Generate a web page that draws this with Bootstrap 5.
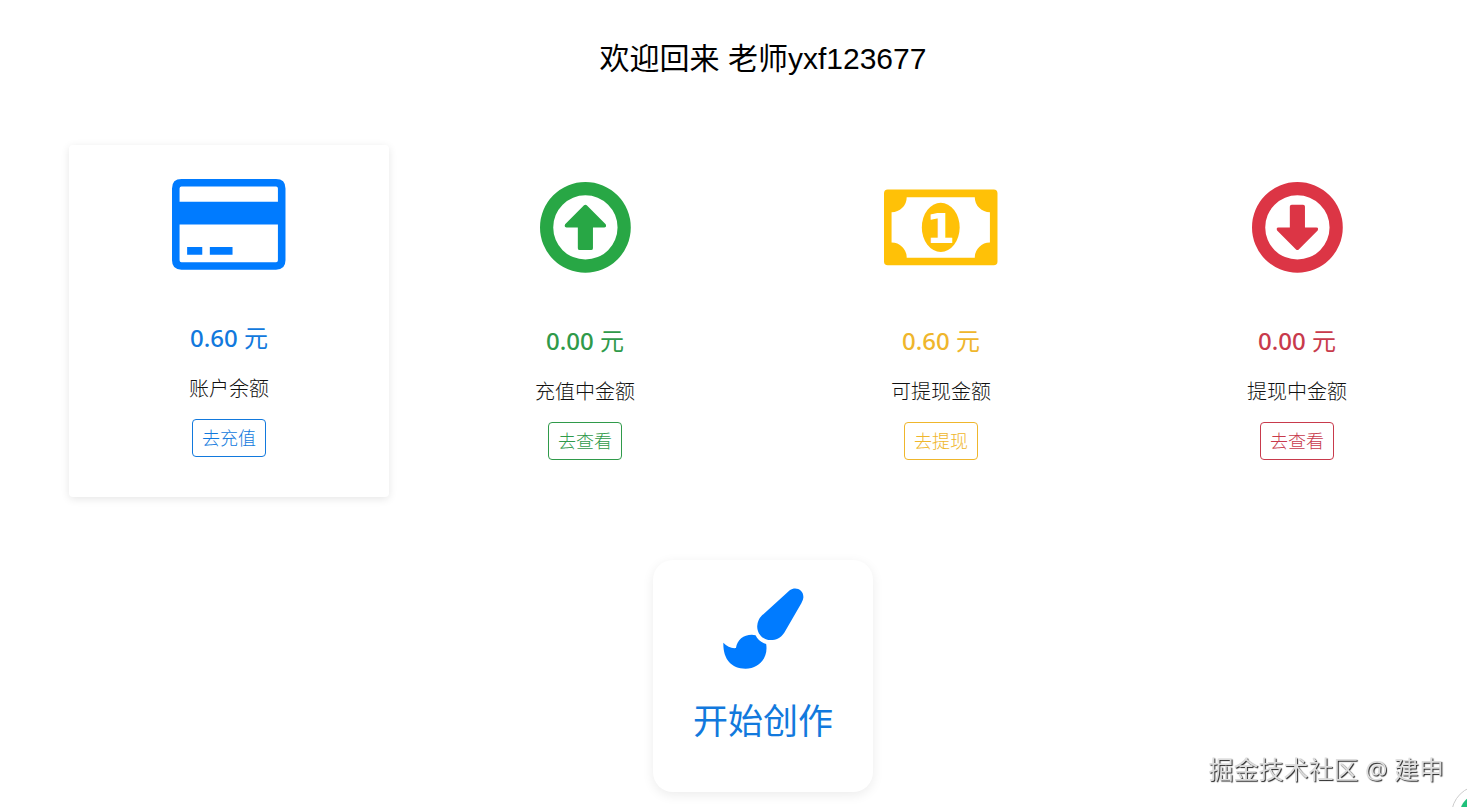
<!DOCTYPE html>
<html lang="zh-CN">
<head>
<meta charset="utf-8">
<meta name="viewport" content="width=device-width, initial-scale=1">
<title>欢迎回来</title>
<link href="https://cdn.jsdelivr.net/npm/bootstrap@5.3.0/dist/css/bootstrap.min.css" rel="stylesheet">
<style>
  body { font-family: "Noto Sans", "Noto Sans CJK SC", sans-serif; color: #212529; overflow: hidden; }
  .dashboard { margin-left: 51px; margin-right: -8px; padding-top: 40px; padding-bottom: 15px; }
  .welcome { font: 400 30px/38px "Liberation Sans", "Noto Sans CJK SC", sans-serif; color: #000; margin-bottom: 70px; }
  .wallet { margin: 0 18px; padding-top: 34px; height: 352px; border-radius: 4px; color: var(--tone); }
  .wallet.raised { margin-top: -3px; box-shadow: 0 2px 8px rgba(0, 0, 0, .1); }
  .wallet svg { display: block; height: 92px; fill: currentColor; overflow: visible; }
  .amount { font-size: 24px; line-height: 32px; font-weight: 500; margin: 51px 0 0; color: var(--ink); }
  .amount span { font-weight: 400; }
  .caption { font-size: 20px; line-height: 30px; font-weight: 300; color: #111; margin: 20px 0 15px; }
  .btn-tone { --bs-btn-color: var(--ink); --bs-btn-border-color: var(--ink); --bs-btn-hover-color: #fff; --bs-btn-hover-bg: var(--tone);
    --bs-btn-border-radius: 4px; --bs-btn-padding-x: 9px; --bs-btn-padding-y: 5px; --bs-btn-font-size: 18px; --bs-btn-line-height: 26px; font-weight: 300; }
  .tone-blue { --tone: #007bff; --ink: #1279dd; }
  .tone-green { --tone: #28a745; --ink: #2f9a4a; }
  .tone-yellow { --tone: #ffc107; --ink: #efb62c; }
  .tone-red { --tone: #dc3545; --ink: #c83a4c; }
  .create { width: 220px; height: 232px; margin: 60px auto 0; padding-top: 28px; border-radius: 20px; color: var(--ink); box-shadow: 0 3px 12px rgba(0, 0, 0, .08); font-size: 35px; line-height: 50px; }
  .create svg { width: 81px; height: 81px; fill: var(--tone); margin-bottom: 27px; }
  .credit { right: 23px; bottom: 20px; font-size: 25px; line-height: 36px; color: #ddd; text-shadow: 1px 1px 1px #222; }
  .helper { right: -44px; bottom: -38px; width: 60px; height: 60px; border: 1px solid #ccc; background: radial-gradient(circle, #1fc17b 21px, #fff 22px); }
</style>
</head>
<body class="bg-white">
<main class="dashboard">
  <h1 class="welcome text-center">欢迎回来 老师yxf123677</h1>
  <div class="row row-cols-4 g-0">
    <div class="col">
      <section class="wallet raised tone-blue d-flex flex-column align-items-center">
        <svg viewBox="0 0 15 12.16" aria-hidden="true"><path fill-rule="evenodd" d="M1.25 0h12.5Q15 0 15 1.25v9.5Q15 12 13.750 12H1.25Q0 12 0 10.750v-9.500Q0 0 1.250 0zM1.250 1Q1 1 1 1.250V3h13V1.250Q14 1 13.750 1zM1 6v4.750Q1 11 1.250 11h12.500Q14 11 14 10.750V6zM2 9h2v1H2zM5 9h3v1H5z"/></svg>
        <h2 class="amount">0.60 <span>元</span></h2>
        <p class="caption">账户余额</p>
        <button type="button" class="btn btn-tone">去充值</button>
      </section>
    </div>
    <div class="col">
      <section class="wallet tone-green d-flex flex-column align-items-center">
        <svg viewBox="0 0 12 12.16" aria-hidden="true"><path fill-rule="evenodd" d="M6 0a6 6 0 1 1 0 12A6 6 0 1 1 6 0zm0 1.750a4.250 4.250 0 1 0 0 8.500a4.250 4.250 0 1 0 0-8.500zM5.820 3.080Q6 2.920 6.180 3.080L8.680 5.580Q8.850 6 8.500 6H7v2.750Q7 9 6.750 9h-1.500Q5 9 5 8.750V6H3.500Q3.150 6 3.320 5.580z"/></svg>
        <h2 class="amount">0.00 <span>元</span></h2>
        <p class="caption">充值中金额</p>
        <button type="button" class="btn btn-tone">去查看</button>
      </section>
    </div>
    <div class="col">
      <section class="wallet tone-yellow d-flex flex-column align-items-center">
        <svg viewBox="0 -1 15 12.16" aria-hidden="true"><path fill-rule="evenodd" d="M.5 0h14Q15 0 15 .5v9Q15 10 14.500 10H.5Q0 10 0 9.500v-9Q0 0 .5 0zM3 1A2 2 0 0 1 1 3v4a2 2 0 0 1 2 2h9a2 2 0 0 1 2-2V3a2 2 0 0 1-2-2z"/><ellipse cx="7.500" cy="5" rx="2.500" ry="3.250"/><text x="7.500" y="7" text-anchor="middle" font-family="DejaVu Sans" font-weight="700" font-size="5.500" fill="#fff">1</text></svg>
        <h2 class="amount">0.60 <span>元</span></h2>
        <p class="caption">可提现金额</p>
        <button type="button" class="btn btn-tone">去提现</button>
      </section>
    </div>
    <div class="col">
      <section class="wallet tone-red d-flex flex-column align-items-center">
        <svg viewBox="0 0 12 12.16" aria-hidden="true"><path fill-rule="evenodd" d="M6 0a6 6 0 1 1 0 12A6 6 0 1 1 6 0zm0 1.750a4.250 4.250 0 1 0 0 8.500a4.250 4.250 0 1 0 0-8.500zM5.820 8.920Q6 9.080 6.180 8.920L8.680 6.420Q8.850 6 8.500 6H7V3.250Q7 3 6.750 3h-1.500Q5 3 5 3.250V6H3.500Q3.150 6 3.320 6.420z"/></svg>
        <h2 class="amount">0.00 <span>元</span></h2>
        <p class="caption">提现中金额</p>
        <button type="button" class="btn btn-tone">去查看</button>
      </section>
    </div>
  </div>
  <a href="#" class="create tone-blue d-flex flex-column align-items-center text-decoration-none">
    <svg viewBox="248 128 244 244" aria-hidden="true"><path d="M449 135C468 122 492 135 490 157Q489 165 484 174L433 262C421 280 408 285 392 285C367 284 351 266 351 243Q352 224 365 211zM249 293C260 304 274 311 287 309C291 284 309 269 335 269L346 270C352 282 363 292 378 297C385 337 357 371 316 371C272 371 248 341 249 293z"/></svg>
    <span>开始创作</span>
  </a>
</main>
<div class="credit position-fixed">掘金技术社区 @ 建申</div>
<button type="button" class="helper position-fixed rounded-circle" aria-label="帮助"></button>
<script src="https://cdn.jsdelivr.net/npm/bootstrap@5.3.0/dist/js/bootstrap.bundle.min.js"></script>
</body>
</html>
